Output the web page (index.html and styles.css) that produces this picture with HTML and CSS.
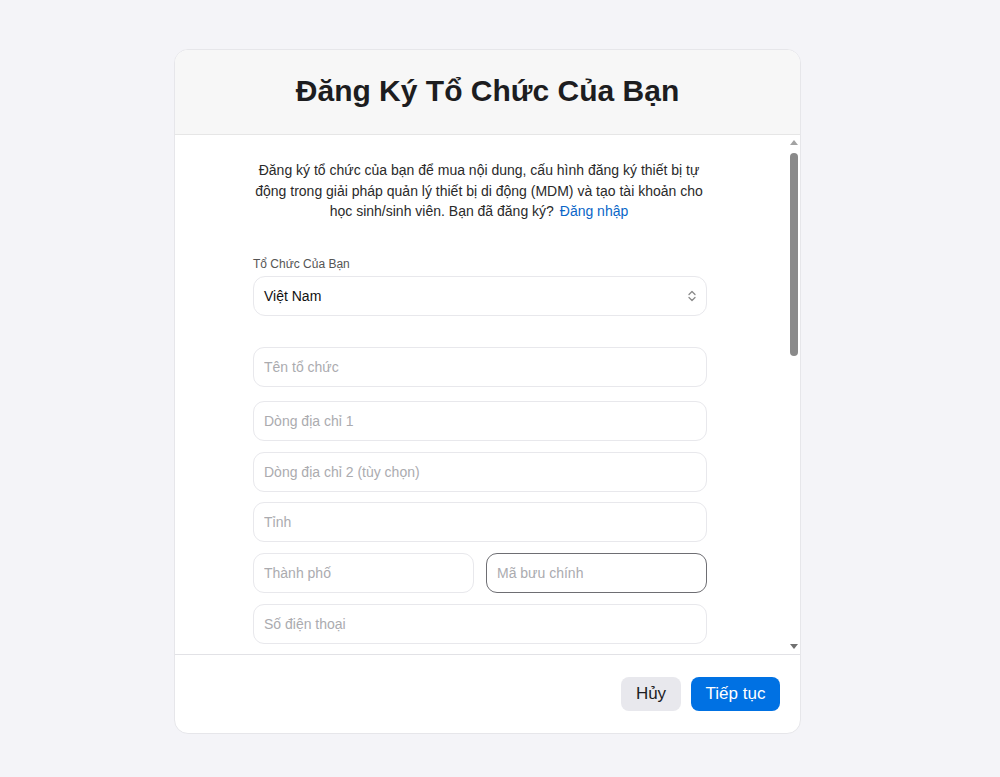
FILE: index.html
```html
<!DOCTYPE html>
<html lang="vi">
<head>
  <meta charset="UTF-8">
  <meta name="viewport" content="width=device-width, initial-scale=1.0">
  <title>Đăng Ký Tổ Chức Của Bạn</title>
  <link rel="stylesheet" href="styles.css">
</head>
<body>

  <div class="card">
    <div class="card-head">
      <h1>Đăng Ký Tổ Chức Của Bạn</h1>
    </div>

    <div class="card-body">
      <div class="scroll">
        <p class="intro">Đăng ký tổ chức của bạn để mua nội dung, cấu hình đăng ký thiết bị tự động trong giải pháp quản lý thiết bị di động (MDM) và tạo tài khoản cho học sinh/sinh viên. Bạn đã đăng ký? <a href="#">Đăng nhập</a></p>

        <form class="form">
          <label class="lbl">Tổ Chức Của Bạn</label>
          <div class="select">
            <span>Việt Nam</span>
            <svg width="8" height="12" viewBox="0 0 8 12"><path d="M1 4.5 4 1.5 7 4.5M1 7.5 4 10.5 7 7.5" fill="none" stroke="#8a8a8a" stroke-width="1.3" stroke-linecap="round" stroke-linejoin="round"/></svg>
          </div>

          <div class="fields">
            <input class="field first" type="text" placeholder="Tên tổ chức">
            <input class="field second" type="text" placeholder="Dòng địa chỉ 1">
            <input class="field" type="text" placeholder="Dòng địa chỉ 2 (tùy chọn)">
            <input class="field" type="text" placeholder="Tỉnh">
            <div class="row">
              <input class="field" type="text" placeholder="Thành phố">
              <input class="field focus" type="text" placeholder="Mã bưu chính">
            </div>
            <input class="field" type="text" placeholder="Số điện thoại">
          </div>
        </form>
      </div>

      <div class="bar">
        <span class="arrow up"></span>
        <div class="track"><div class="thumb"></div></div>
        <span class="arrow down"></span>
      </div>
    </div>

    <div class="card-foot">
      <button class="btn btn-gray">Hủy</button>
      <button class="btn btn-blue">Tiếp tục</button>
    </div>
  </div>

</body>
</html>
```

FILE: styles.css
```css
* { box-sizing: border-box; }
html, body {
  margin: 0;
  background: #f4f4f8;
  font-family: 'Liberation Sans', Arial, sans-serif;
  color: #1d1d1f;
}
body {
  padding: 49px 0 0 174px;
}
.card {
  width: 627px;
  height: 685px;
  background: #fff;
  border: 1px solid #e6e6ea;
  border-radius: 14px;
  overflow: hidden;
  display: flex;
  flex-direction: column;
}
.card-head {
  height: 85px;
  background: #f7f7f7;
  border-bottom: 1px solid #e6e6e6;
  display: flex;
  align-items: center;
  justify-content: center;
}
h1 {
  margin: 0 0 2px;
  font-size: 30px;
  font-weight: 700;
  color: #1d1d1f;
}
.card-body {
  height: 519px;
  display: flex;
  overflow: hidden;
}
.scroll {
  flex: 1;
  padding: 25px 0 0 78px;
}
.intro {
  width: 466px;
  margin: 0 0 0 -7px;
  font-size: 14px;
  line-height: 20.5px;
  text-align: center;
  color: #2a2a2a;
}
.intro a {
  color: #0a66c8;
  text-decoration: none;
  margin-left: 2px;
}
.form {
  width: 454px;
  margin-top: 35px;
}
.lbl {
  display: block;
  font-size: 12px;
  color: #555;
  line-height: 14px;
  margin-bottom: 5px;
}
.select {
  height: 40px;
  border: 1px solid #e8e8ec;
  border-radius: 12px;
  padding: 0 10px;
  display: flex;
  align-items: center;
  justify-content: space-between;
  font-size: 14px;
  color: #111;
}
.fields {
  display: flex;
  flex-direction: column;
  gap: 10.8px;
  margin-top: 31px;
}
.row {
  display: flex;
  gap: 12px;
}
.row .field {
  flex: 1;
  min-width: 0;
}
.field {
  height: 40px;
  width: 100%;
  border: 1px solid #e8e8ec;
  border-radius: 11px;
  padding: 0 10px;
  font-family: inherit;
  font-size: 14px;
  color: #111;
  background: #fff;
  outline: none;
}
.field.second {
  margin-top: 3.5px;
}
.field::placeholder {
  color: #ababaf;
}
.field.focus {
  border-color: #6e6e73;
}
.bar {
  width: 15px;
  display: flex;
  flex-direction: column;
  align-items: center;
  padding: 5px 0 5px 3px;
}
.arrow {
  width: 0;
  height: 0;
  border-left: 4px solid transparent;
  border-right: 4px solid transparent;
}
.arrow.up {
  border-bottom: 5px solid #a3a3a3;
}
.arrow.down {
  border-top: 5px solid #707070;
}
.track {
  flex: 1;
  width: 100%;
  padding: 8px 0 0;
  display: flex;
  justify-content: center;
}
.thumb {
  width: 8px;
  height: 203px;
  background: #8a8a8a;
  border-radius: 4px;
}
.card-foot {
  flex: 1;
  border-top: 1px solid #e2e2e6;
  display: flex;
  align-items: center;
  justify-content: flex-end;
  gap: 10px;
  padding: 0 20px 0 0;
}
.btn {
  height: 34px;
  border: none;
  border-radius: 8px;
  font-family: inherit;
  font-size: 17px;
  padding: 0 14px;
}
.btn-gray {
  background: #e8e8ed;
  color: #1d1d1f;
  width: 60px;
  padding: 0;
}
.btn-blue {
  background: #0071e3;
  color: #fff;
  width: 89px;
  padding: 0;
}
```
